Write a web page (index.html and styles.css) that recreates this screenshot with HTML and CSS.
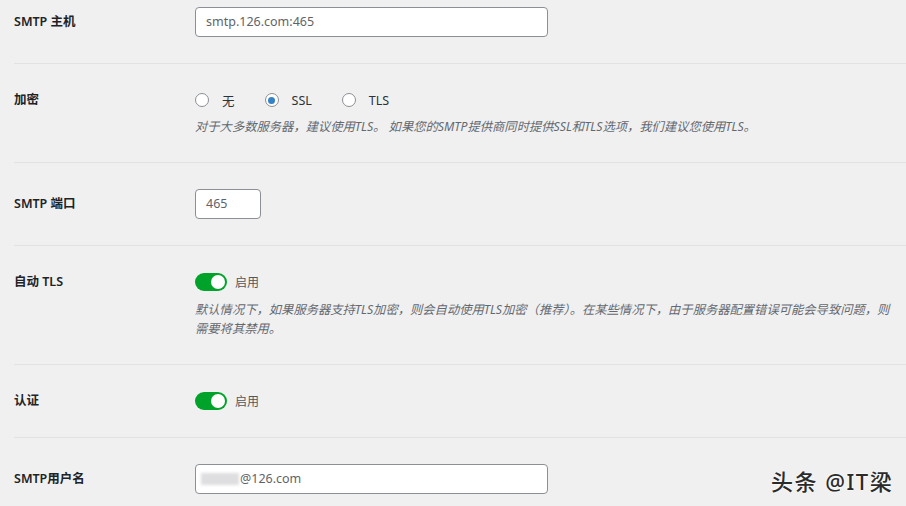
FILE: index.html
```html
<!DOCTYPE html>
<html lang="zh-CN">
<head>
  <meta charset="UTF-8">
  <title>SMTP 设置</title>
  <link rel="stylesheet" href="styles.css">
</head>
<body>
  <div class="settings">

    <!-- SMTP 主机 -->
    <div class="setting-row first">
      <div class="setting-label lh-input">SMTP 主机</div>
      <div class="setting-field">
        <div class="text-input wide">smtp.126.com:465</div>
      </div>
    </div>

    <!-- 加密 -->
    <div class="setting-row">
      <div class="setting-label lh-radio">加密</div>
      <div class="setting-field">
        <div class="radio-group">
          <label class="radio"><span class="radio-dot"></span>无</label>
          <label class="radio checked"><span class="radio-dot"></span>SSL</label>
          <label class="radio"><span class="radio-dot"></span>TLS</label>
        </div>
        <p class="desc">对于大多数服务器，建议使用TLS。 如果您的SMTP提供商同时提供SSL和TLS选项，我们建议您使用TLS。</p>
      </div>
    </div>

    <!-- SMTP 端口 -->
    <div class="setting-row">
      <div class="setting-label lh-input">SMTP 端口</div>
      <div class="setting-field">
        <div class="text-input small">465</div>
      </div>
    </div>

    <!-- 自动 TLS -->
    <div class="setting-row">
      <div class="setting-label lh-toggle">自动 TLS</div>
      <div class="setting-field">
        <div class="toggle-line">
          <span class="toggle on"><span class="knob"></span></span>
          <span class="toggle-text">启用</span>
        </div>
        <p class="desc">默认情况下，如果服务器支持TLS加密，则会自动使用TLS加密（推荐）。在某些情况下，由于服务器配置错误可能会导致问题，则需要将其禁用。</p>
      </div>
    </div>

    <!-- 认证 -->
    <div class="setting-row">
      <div class="setting-label lh-toggle">认证</div>
      <div class="setting-field">
        <div class="toggle-line">
          <span class="toggle on"><span class="knob"></span></span>
          <span class="toggle-text">启用</span>
        </div>
      </div>
    </div>

    <!-- SMTP用户名 -->
    <div class="setting-row last">
      <div class="setting-label lh-input">SMTP用户名</div>
      <div class="setting-field">
        <div class="text-input wide user"><span class="blur"></span>@126.com</div>
      </div>
    </div>

  </div>

  <div class="watermark">头条 @IT梁</div>
</body>
</html>
```

FILE: styles.css
```css
body {
  margin: 0;
  background: #f0f0f1;
  font-family: "Noto Sans", "Noto Sans CJK SC", sans-serif;
  color: #1d2327;
  overflow: hidden;
  height: 506px;
  position: relative;
}

.settings {
  margin-left: 14px;
}

.setting-row {
  display: flex;
  align-items: flex-start;
  padding: 26px 0;
  border-bottom: 1px solid #e2e2e4;
}

.setting-row.first {
  padding-top: 7px;
}

.setting-row.last {
  border-bottom: none;
}

.setting-label {
  width: 181px;
  flex-shrink: 0;
  font-size: 12.5px;
  font-weight: 600;
}

.lh-input { line-height: 30px; }
.lh-radio { line-height: 20px; }
.lh-toggle { line-height: 20px; }

.setting-field {
  flex: 1;
  min-width: 0;
}

/* Campos de texto */
.text-input {
  box-sizing: border-box;
  height: 30px;
  line-height: 28px;
  padding: 0 10px;
  background: #fff;
  border: 1px solid #8c8f94;
  border-radius: 4px;
  font-size: 12.5px;
  color: #5f6368;
}

.text-input.wide {
  width: 353px;
}

.text-input.small {
  width: 66px;
}

.text-input.user {
  display: flex;
  align-items: center;
  padding-left: 5px;
}

.blur {
  display: inline-block;
  width: 38px;
  height: 12px;
  margin-right: 1px;
  background: #dedee0;
  filter: blur(1.5px);
}

/* Radios */
.radio-group {
  display: flex;
  align-items: center;
  height: 20px;
  font-size: 12.5px;
  color: #2c3338;
}

.radio {
  display: flex;
  align-items: center;
  margin-right: 30px;
}

.radio-dot {
  box-sizing: border-box;
  width: 14px;
  height: 14px;
  border: 1px solid #8c8f94;
  border-radius: 50%;
  background: #fff;
  margin-right: 13px;
  display: flex;
  align-items: center;
  justify-content: center;
}

.radio.checked .radio-dot::after {
  content: "";
  width: 7px;
  height: 7px;
  border-radius: 50%;
  background: #3582c4;
}

.desc {
  margin: 7px 0 0;
  max-width: 700px;
  font-size: 12.3px;
  line-height: 19px;
  font-style: italic;
  color: #646970;
}

.toggle-line + .desc {
  margin-top: 8px;
}

/* Interruptor */
.toggle-line {
  display: flex;
  align-items: center;
  height: 20px;
}

.toggle {
  box-sizing: border-box;
  width: 32px;
  height: 18px;
  border-radius: 9px;
  background: #00a32a;
  display: flex;
  align-items: center;
  justify-content: flex-end;
  padding: 2px;
}

.knob {
  width: 14px;
  height: 14px;
  border-radius: 50%;
  background: #fff;
}

.toggle-text {
  margin-left: 8px;
  font-size: 12px;
  color: #50575e;
}

.watermark {
  position: absolute;
  left: 771px;
  top: 464px;
  font-size: 22px;
  font-weight: 500;
  color: #2b2b2b;
  text-shadow: 0 0 2px #fff, 0 0 2px #fff;
  letter-spacing: 1.5px;
}
```
